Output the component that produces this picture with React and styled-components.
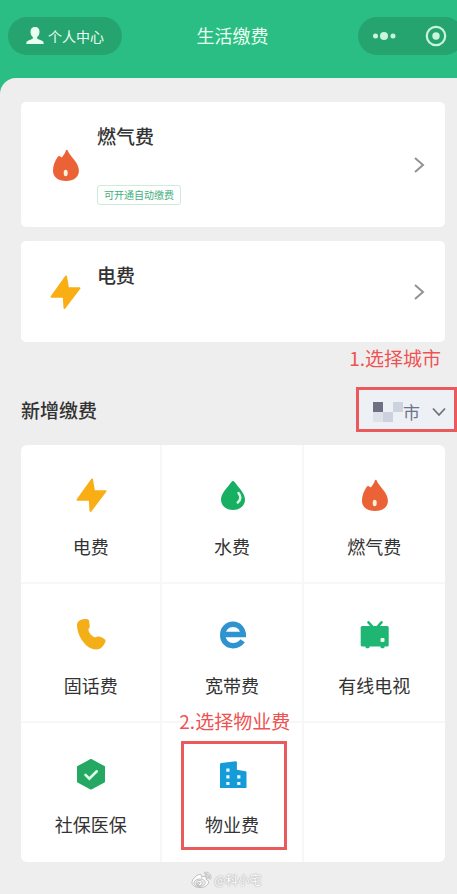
import React, { useState } from "react";
import styled, { createGlobalStyle } from "styled-components";
import { FaWeibo } from "react-icons/fa";

const GlobalStyle = createGlobalStyle`
  * {
    box-sizing: border-box;
  }

  body {
    margin: 0;
    background: #2bbe84;
    font-family: "Noto Sans CJK SC", "Noto Sans", sans-serif;
    color: #333;
  }

  button, select {
    font-family: inherit;
    color: inherit;
  }
`;

const Header = styled.header`
  display: grid;
  grid-template-columns: 1fr auto 1fr;
  align-items: center;
  height: 78px;
  padding: 0 0 6px 8px;
  overflow: hidden;
  background: #2bbe84;
  color: #e9fff0;

  h1 {
    margin: 0;
    padding-bottom: 2px;
    font-size: 18px;
    line-height: 24px;
    font-weight: 400;
  }
`;

const ProfileButton = styled.button`
  display: flex;
  align-items: center;
  justify-self: start;
  gap: 4px;
  height: 38px;
  padding: 0 18px;
  border: 0;
  border-radius: 19px;
  background: #26a470;
  color: #e9fff0;
  font-size: 14px;
  line-height: 20px;
`;

const Capsule = styled.div`
  display: flex;
  align-items: center;
  justify-self: end;
  justify-content: space-between;
  width: 106px;
  height: 38px;
  margin-right: -7px;
  padding: 0 16px 0 13px;
  border-radius: 19px;
  background: #26a470;
`;

const CapsuleButton = styled.button`
  display: flex;
  padding: 0;
  border: 0;
  background: none;
`;

const Page = styled.main`
  padding: 24px 12px 0 21px;
  border-top-left-radius: 16px;
  background: #eee;
`;

const Bills = styled.div`
  display: flex;
  flex-direction: column;
  gap: 14px;
`;

const BillCard = styled.button`
  display: flex;
  align-items: center;
  width: 100%;
  padding: 22px 20px 22px 26px;
  border: 0;
  border-radius: 5px;
  background: #fff;
  text-align: left;
`;

const BillBody = styled.div`
  display: flex;
  flex: 1;
  flex-direction: column;
  align-items: flex-start;
  gap: 37px;
  min-height: 57px;
  margin-left: 14px;

  strong {
    font-size: 19px;
    line-height: 24px;
    font-weight: 500;
  }
`;

const Tag = styled.span`
  height: 20px;
  padding: 0 6px;
  border: 1px solid #cfe9db;
  border-radius: 3px;
  color: #3fae7c;
  font-size: 10px;
  line-height: 18px;
`;

const Note = styled.p`
  margin: 0;
  color: #ee5253;
  font-size: 19px;
  line-height: 24px;
  white-space: nowrap;
`;

const CityNote = styled(Note)`
  margin: 4px 4px 17px;
  text-align: right;
`;

const SectionHead = styled.div`
  display: flex;
  align-items: center;
  justify-content: space-between;
  margin-right: -12px;
  margin-bottom: 13px;

  h2 {
    margin: 0;
    font-size: 19px;
    line-height: 24px;
    font-weight: 500;
  }
`;

const CityPicker = styled.label`
  display: flex;
  align-items: center;
  width: 101px;
  height: 45px;
  padding: 4px 8px 0 14px;
  border: 3px solid #e85a5c;
  background: #edf0f5;
  color: #6c7488;

  select {
    flex: 1;
    min-width: 0;
    padding: 0;
    border: 0;
    appearance: none;
    background: none;
    font-size: 17px;
    line-height: 24px;
  }
`;

const ServiceGrid = styled.div`
  display: grid;
  grid-template-columns: repeat(3, 1fr);
  border-radius: 6px;
  background: #fff;
`;

const Cell = styled.div`
  position: relative;
  height: 139px;
  border: 0 solid #f7f7f7;
  border-right-width: ${props => (props.$lastColumn ? 0 : 2)}px;
  border-bottom-width: ${props => (props.$lastRow ? 0 : 2)}px;
`;

const ServiceButton = styled.button`
  display: flex;
  flex-direction: column;
  align-items: center;
  gap: 21px;
  width: 100%;
  padding: 32px 0 0;
  border: 0;
  background: none;
  font-size: 18px;
  line-height: 24px;
`;

const Highlight = styled.div`
  position: absolute;
  inset: 18px 15px 12px 19px;
  border: 3px solid #e85a5c;
  pointer-events: none;
`;

const ServiceNote = styled(Note)`
  position: absolute;
  top: -14px;
  left: 17px;
`;

const Footer = styled.footer`
  display: flex;
  align-items: center;
  justify-content: center;
  gap: 3px;
  height: 36px;
  padding-right: 12px;
  color: #fff;
  font-size: 12px;
  line-height: 18px;
  text-shadow: 0 0 1px #999, 0 0 2px #bbb;

  svg {
    overflow: visible;
    stroke: #999;
    stroke-width: 16px;
  }
`;

const Icon = ({ children }) => (
  <svg width="36" height="36" viewBox="0 0 36 36" fill="none" aria-hidden="true">
    {children}
  </svg>
);

const FlameIcon = () => (
  <Icon>
    <path
      d="M19 3.200c.4-.7 1.200-.7 1.600 0 1.200 3.300 4 6.300 6.900 10 2.700 3.500 4.400 6.700 4.400 10.600C31.900 30.300 26.700 34 19 34S6 30.300 6 23.800c0-5 1.800-9.400 4.600-13.700.7-1.200 1.800-1.300 2.800-.5l1.200.9c2-1.800 3.400-4.300 4.400-7.300z"
      fill="#eb6237"
    />
    <ellipse cx="18.700" cy="26" rx="2" ry="3.200" fill="#fff3dc" />
  </Icon>
);

const BoltIcon = () => (
  <Icon>
    <path
      d="M19 2.500 4.500 22.800h12.300l.7 11.200L32.500 14.200H21z"
      fill="#f9ae14"
      stroke="#f9ae14"
      strokeWidth="2"
      strokeLinejoin="round"
    />
  </Icon>
);

const WaterIcon = () => (
  <Icon>
    <path
      d="M19 4c.7 0 1.300.6 2 1.500C25.500 11.500 31 16.800 31 22.500 31 28.700 26 33 19 33S7 28.700 7 22.500C7 16.800 12.500 11.500 17 5.500c.7-.9 1.300-1.500 2-1.500z"
      fill="#17b063"
    />
    <path d="M24.500 16c2.600 3.400 2.400 6.800-.8 9.500" stroke="#dcffe9" strokeWidth="2.400" strokeLinecap="round" />
  </Icon>
);

const PhoneIcon = () => (
  <Icon>
    <path
      d="M7 4.200c2.600-1.300 5-1.500 7.500-.9 1 .3 1.500.8 1.600 1.800l.7 5.200c.1 1.500-1.600 2.300-1.300 3.900.7 3 3.800 6.500 6.300 7 1.500.3 2.800-.9 4.300-.6 2 .5 4.200 1.500 5.800 2.800.8.7.9 1.500.4 2.600-1 2.600-2.900 5.200-5.500 6.800-2 1.200-5.800 1-8.300-.2C11 29.700 4.500 19.500 4 9.800c-.1-2.500.7-4.500 3-5.600z"
      fill="#f3ae18"
    />
  </Icon>
);

const BroadbandIcon = () => (
  <Icon>
    <path
      d="M8 18.500h21.200C28.800 12.400 24.600 8.300 19 8.300c-6 0-10.300 4.500-10.300 10.700S13 29.700 19 29.700c4.200 0 7.300-1.600 9.600-4.900"
      stroke="#2f93cf"
      strokeWidth="5.400"
    />
    <path d="M9 18.500h22.800" stroke="#2f93cf" strokeWidth="4" />
  </Icon>
);

const TvIcon = () => (
  <Icon>
    <path d="m12.500 6.300 4 4.500M25.500 6.300l-4 4.500" stroke="#1fb573" strokeWidth="2.600" strokeLinecap="round" />
    <rect x="4.700" y="10" width="28" height="20.500" rx="1.500" fill="#1fb573" />
    <path d="M9.500 30h4v1.500l-1 .8h-2l-1-.8zM24.500 30h4v1.500l-1 .8h-2l-1-.8z" fill="#1fb573" />
    <rect x="24.500" y="22" width="4" height="4" rx="1" fill="#e6ffe4" />
  </Icon>
);

const InsuranceIcon = () => (
  <Icon>
    <path
      d="M18 5 31 12v14.500L18 33.500 5 26.500V12z"
      fill="#25a862"
      stroke="#25a862"
      strokeWidth="2"
      strokeLinejoin="round"
    />
    <path d="m12.500 19.800 3.800 3.800 7.500-7.300" stroke="#dfffed" strokeWidth="2.600" strokeLinecap="round" />
  </Icon>
);

const PropertyIcon = () => (
  <Icon>
    <path
      d="M6 9.300c0-.8.400-1.200 1.200-1.300L22 6.300c.6 0 .9.300.9.900v7.600l8.600 1.400c.7.100 1 .5 1 1.200V33H6z"
      fill="#159bd7"
    />
    <path
      d="M12.300 13.500h3.200v3.200h-3.200zM12.300 20.200h3.200v3.200h-3.200zM12.300 26.900h3.200v3.200h-3.200zM23.200 20.200h3.200v3.200h-3.200zM23.200 26.900h3.200v3.200h-3.200z"
      fill="#e5faff"
    />
  </Icon>
);

const UserIcon = () => (
  <svg width="18" height="18" viewBox="0 0 18 18" fill="currentColor" aria-hidden="true">
    <path d="M9 0c3 0 4.500 2 4.500 4.700 0 2.300-.9 4.300-2.300 5.300-.3 1.200 0 1.800 1.200 2.300l3.600 1.400c1.200.5 1.700 1.400 1.700 3.300H.3c0-1.900.5-2.800 1.700-3.300l3.600-1.400c1.200-.5 1.500-1.100 1.200-2.300-1.400-1-2.300-3-2.300-5.300C4.500 2 6 0 9 0z" />
  </svg>
);

const RightArrow = () => (
  <svg width="12" height="18" viewBox="0 0 12 18" fill="none" aria-hidden="true">
    <path d="m2 2 8 7-8 7" stroke="#929292" strokeWidth="2" />
  </svg>
);

const bills = [
  { name: "燃气费", icon: FlameIcon, tag: "可开通自动缴费" },
  { name: "电费", icon: BoltIcon }
];

const services = [
  { name: "电费", icon: BoltIcon },
  { name: "水费", icon: WaterIcon },
  { name: "燃气费", icon: FlameIcon },
  { name: "固话费", icon: PhoneIcon },
  { name: "宽带费", icon: BroadbandIcon },
  { name: "有线电视", icon: TvIcon },
  { name: "社保医保", icon: InsuranceIcon },
  { name: "物业费", icon: PropertyIcon, note: "2.选择物业费" },
  null
];

const App = () => {
  const [city, setCity] = useState("市");

  return (
    <>
      <GlobalStyle />
      <Header>
        <ProfileButton type="button">
          <UserIcon />
          个人中心
        </ProfileButton>
        <h1>生活缴费</h1>
        <Capsule>
          <CapsuleButton type="button">
            <svg width="26" height="10" viewBox="0 0 26 10" fill="#c9f5dc">
              <circle cx="4.500" cy="5" r="2.500" />
              <circle cx="13" cy="5" r="4" />
              <circle cx="22" cy="5" r="2.500" />
            </svg>
          </CapsuleButton>
          <CapsuleButton type="button">
            <svg width="24" height="24" viewBox="0 0 24 24">
              <circle cx="12" cy="12" r="9.200" fill="none" stroke="#c9f5dc" strokeWidth="2.200" />
              <circle cx="12" cy="12" r="3.700" fill="#c9f5dc" />
            </svg>
          </CapsuleButton>
        </Capsule>
      </Header>

      <Page>
        <Bills>
          {bills.map(bill => (
            <BillCard type="button" key={bill.name}>
              <bill.icon />
              <BillBody>
                <strong>{bill.name}</strong>
                {bill.tag && <Tag>{bill.tag}</Tag>}
              </BillBody>
              <RightArrow />
            </BillCard>
          ))}
        </Bills>

        <CityNote>1.选择城市</CityNote>
        <SectionHead>
          <h2>新增缴费</h2>
          <CityPicker>
            {/* blurred-out city name */}
            <svg width="30" height="20" viewBox="0 0 30 20" aria-hidden="true">
              <path d="M0 0h10v10H0z" fill="#6e7183" />
              <path d="M20 0h10v10H20z" fill="#cdd3de" />
              <path d="M0 10h10v10H0z" fill="#dde1ea" />
              <path d="M10 10h10v10H10z" fill="#cdd1dd" />
            </svg>
            <select value={city} onChange={e => setCity(e.target.value)}>
              <option>市</option>
            </select>
            <svg width="14" height="10" viewBox="0 0 14 10" fill="none" aria-hidden="true">
              <path d="m1 1.500 6 6.500 6-6.500" stroke="#6f727a" strokeWidth="1.800" />
            </svg>
          </CityPicker>
        </SectionHead>

        <ServiceGrid>
          {services.map((service, i) => (
            <Cell key={i} $lastColumn={i % 3 === 2} $lastRow={i > 5}>
              {service && (
                <ServiceButton type="button">
                  <service.icon />
                  {service.name}
                </ServiceButton>
              )}
              {service && service.note && (
                <>
                  <Highlight />
                  <ServiceNote>{service.note}</ServiceNote>
                </>
              )}
            </Cell>
          ))}
        </ServiceGrid>

        <Footer>
          <FaWeibo size={19} />
          @科小宅
        </Footer>
      </Page>
    </>
  );
};

export default App;
